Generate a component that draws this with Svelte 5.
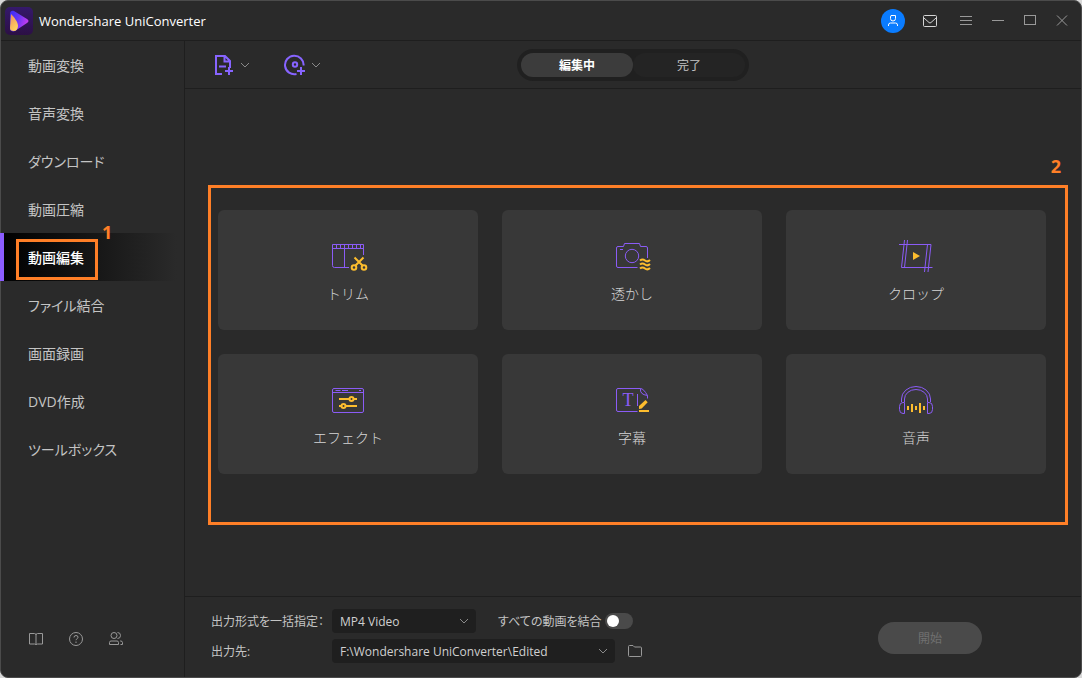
<script lang="ts">
	const navItems = [
		'動画変換',
		'音声変換',
		'ダウンロード',
		'動画圧縮',
		'動画編集',
		'ファイル結合',
		'画面録画',
		'DVD作成',
		'ツールボックス'
	];

	const tools = [
		{ id: 'trim', label: 'トリム' },
		{ id: 'watermark', label: '透かし' },
		{ id: 'crop', label: 'クロップ' },
		{ id: 'effect', label: 'エフェクト' },
		{ id: 'subtitle', label: '字幕' },
		{ id: 'audio', label: '音声' }
	];

	const tabs = ['編集中', '完了'];

	let activeNav = $state('動画編集');
	let activeTab = $state('編集中');
	let format = $state('MP4 Video');
	let folder = $state('F:\\Wondershare UniConverter\\Edited');
	let merge = $state(false);
</script>

{#snippet chevron()}
	<svg class="chevron" width="10" height="6" viewBox="0 0 10 6"><path d="M1 1l4 4 4-4" /></svg>
{/snippet}

<div class="window">
	<header class="titlebar">
		<svg class="logo" width="28" height="28" viewBox="0 0 28 28">
			<defs>
				<linearGradient id="logo-bg" x1="0" y1="0" x2="0" y2="1">
					<stop offset="0" stop-color="#35196b" />
					<stop offset="1" stop-color="#2c1045" />
				</linearGradient>
				<linearGradient id="logo-play" x1="0" y1="0" x2="1" y2="0.4">
					<stop offset="0" stop-color="#3a2cf5" />
					<stop offset="0.5" stop-color="#6535f5" />
					<stop offset="1" stop-color="#c23cf0" />
				</linearGradient>
				<linearGradient id="logo-drop" x1="0" y1="0" x2="0.5" y2="1">
					<stop offset="0" stop-color="#ef8c62" />
					<stop offset="1" stop-color="#ffd25c" />
				</linearGradient>
			</defs>
			<rect width="28" height="28" rx="5" fill="url(#logo-bg)" />
			<path d="M5 7c0-3 2-4 4-3l13 8c2 1 2 3 0 4L10 24c-2 1-5 0-5-2z" fill="url(#logo-play)" />
			<path d="M6 7c3 3 7 8 7 12 0 3-2 5-4 5-3 0-4-1-4-3z" fill="url(#logo-drop)" />
		</svg>
		<span class="title">Wondershare UniConverter</span>
		<div class="controls">
			<button class="avatar" aria-label="アカウント">
				<svg width="24" height="24" viewBox="0 0 24 24">
					<path d="M10 6.500h4.500v3a2.500 2.500 0 0 1-5 0v-1.500zM7.500 17v-1q0-2 2-2h5q2 0 2 2v1" />
				</svg>
			</button>
			<button class="mail" aria-label="メッセージ">
				<svg width="14" height="14" viewBox="0 0 14 14">
					<rect x="0.500" y="1.500" width="13" height="11" rx="1" />
					<path d="M1 4l5 4.500q1 1 2 0L13 4" />
				</svg>
			</button>
			<button aria-label="メニュー">
				<svg width="12" height="12" viewBox="0 0 12 12"><path d="M0 1.500h12M0 5.500h12M0 9.500h12" /></svg>
			</button>
			<button aria-label="最小化">
				<svg width="12" height="12" viewBox="0 0 12 12"><path d="M0 5.500h12" /></svg>
			</button>
			<button aria-label="最大化">
				<svg width="12" height="12" viewBox="0 0 12 12"><rect x="0.500" y="0.500" width="11" height="9" /></svg>
			</button>
			<button aria-label="閉じる">
				<svg width="12" height="12" viewBox="0 0 12 12"><path d="M1 0.500l10 10M11 0.500l-10 10" /></svg>
			</button>
		</div>
	</header>

	<div class="body">
		<aside class="sidebar">
			<nav>
				{#each navItems as item (item)}
					<button class="nav-item" class:active={item === activeNav} onclick={() => (activeNav = item)}>
						{item}
						{#if item === '動画編集'}
							<span class="mark mark-nav"><b>1</b></span>
						{/if}
					</button>
				{/each}
			</nav>
			<div class="sidebar-tools">
				<button aria-label="ガイド">
					<svg width="16" height="16" viewBox="0 0 16 16">
						<path d="M1.500 2.500h5q1.500 0 1.500 1.500q0-1.500 1.500-1.500h5v10.500h-5q-1.500 0-1.500 1q0-1-1.500-1h-5zM8 4v10" />
					</svg>
				</button>
				<button aria-label="ヘルプ">
					<svg width="16" height="16" viewBox="0 0 16 16">
						<circle cx="8" cy="8" r="6.500" />
						<path d="M6 6.500q0-2 2-2t2 1.700q0 1-1 1.600t-1 1.400M8 10.500v1.500" />
					</svg>
				</button>
				<button aria-label="コミュニティ">
					<svg width="16" height="16" viewBox="0 0 16 16">
						<circle cx="6" cy="4.500" r="3" />
						<path d="M9.500 1.500a3 3 0 0 1 0 6M1.500 13.500v-2q0-1.500 1.500-1.500h6q1.500 0 1.500 1.500v2zM12 10h.500q2 0 2 1.500v2H12.500" />
					</svg>
				</button>
			</div>
		</aside>

		<main class="main">
			<div class="toolbar">
				<div class="add-buttons">
					<button aria-label="ファイルを追加">
						<svg width="22" height="22" viewBox="0 0 22 22" class="add-icon">
							<path d="M9 20H3V2h9l5 5v7M11.500 2v5.500H17M6 12.500h7M12 17h8M16 13v8" />
						</svg>
						{@render chevron()}
					</button>
					<button aria-label="ディスクを追加">
						<svg width="22" height="22" viewBox="0 0 22 22" class="add-icon">
							<path d="M12.500 20A9.300 9.300 0 1 1 19.600 11.500M13 17h8M17 13v8" />
							<circle cx="11" cy="10.500" r="2.200" />
						</svg>
						{@render chevron()}
					</button>
				</div>
				<div class="tabs">
					{#each tabs as tab (tab)}
						<button class:active={tab === activeTab} onclick={() => (activeTab = tab)}>{tab}</button>
					{/each}
				</div>
			</div>

			<section class="content">
				<div class="grid">
					{#each tools as tool (tool.id)}
						<button class="card">
							<svg class="tool-icon" width="40" height="40" viewBox="0 0 40 40">
								{#if tool.id === 'trim'}
									<path d="M21 31.500H6.500q-2 0-2-2v-21h31v10.500M4.500 12.500h31M16.500 12.500v19M8.500 8.500v4M12.500 8.500v4M16.500 8.500v4M20.500 8.500v4M24.500 8.500v4M28.500 8.500v4M32.500 8.500v4" />
									<g class="accent">
										<path d="M26.500 21.500l8 8M35.500 21.500l-8 8" />
										<circle cx="26" cy="31.500" r="2.300" />
										<circle cx="36" cy="31.500" r="2.300" />
									</g>
								{:else if tool.id === 'watermark'}
									<path d="M25.500 31.500H6q-1.500 0-1.500-1.500V12q0-1.500 1.500-1.500h5.500l1-3h15l1 3H34q1.500 0 1.500 1.500v10M8 13.500h3" />
									<circle cx="20" cy="20" r="6.700" />
									<path class="accent" d="M28 24.500q2.500-2 5 0t5-.500M28 28.500q2.500-2 5 0t5-.500M28 32.500q2.500-2 5 0t5-.500" />
								{:else if tool.id === 'crop'}
									<path d="M3 8.500h32M5.500 31.500h31M8.500 4L5.500 31.500M11.500 4L8.500 31.500M31.500 8.500L28.500 36M35 8.500L32 36" />
									<path class="fill" d="M17 16l7 4-7 4z" />
								{:else if tool.id === 'effect'}
									<rect x="4.500" y="8.500" width="31" height="24" rx="1.500" />
									<path d="M4.500 12.500h31M7.500 10.500h5M14 10.500h6M31 10.500h2" />
									<g class="accent">
										<path d="M11 19h10.500M25.500 19h3.500M11 26h2.500M18 26h11" />
										<circle cx="23.500" cy="19" r="2" />
										<circle cx="15.500" cy="26" r="2" />
									</g>
								{:else if tool.id === 'subtitle'}
									<path d="M25.500 31.500H6q-1.500 0-1.500-1.500V10q0-1.500 1.500-1.500h22.500q3 0 7 7v3M28.500 8.500q-1 6 7 7M25.500 14v12" />
									<text x="16" y="26" text-anchor="middle">T</text>
									<path class="accent" d="M27 31h10" />
									<path class="fill" d="M27 29v-3l6.500-6 2.200 2.200-6 6.300z" />
								{:else}
									<path d="M5.500 22v-3a14.500 12.500 0 0 1 29 0v3M8.500 22v-3a11.500 9.500 0 0 1 23 0v3" />
									<path d="M8.500 22.500v11H7q-3.500 0-3.500-4v-3q0-4 3.500-4zM31.500 22.500v11H33q3.500 0 3.500-4v-3q0-4-3.500-4z" />
									<path class="accent" d="M12 26v4M16 24v8M20 26v4M24 23v10M28 26v4" />
								{/if}
							</svg>
							<span>{tool.label}</span>
						</button>
					{/each}
					<span class="mark mark-grid"><b>2</b></span>
				</div>
			</section>

			<footer class="footer">
				<div class="options">
					<label for="format">出力形式を一括指定：</label>
					<div class="row">
						<div class="select format">
							<select id="format" bind:value={format}>
								<option>MP4 Video</option>
							</select>
							{@render chevron()}
						</div>
						<label class="merge">
							すべての動画を結合
							<input type="checkbox" role="switch" bind:checked={merge} />
						</label>
					</div>
					<label for="folder">出力先:</label>
					<div class="row">
						<div class="select folder">
							<select id="folder" bind:value={folder}>
								<option>F:\Wondershare UniConverter\Edited</option>
							</select>
							{@render chevron()}
						</div>
						<button class="browse" aria-label="フォルダを開く">
							<svg width="14" height="12" viewBox="0 0 14 12">
								<path d="M0.500 1.500q0-1 1-1h3.500l1.500 1.500h6q1 0 1 1v7.500q0 1-1 1h-11q-1 0-1-1z" />
							</svg>
						</button>
					</div>
				</div>
				<button class="start" disabled>開始</button>
			</footer>
		</main>
	</div>
</div>

<style>
	:global(body) {
		background: #d8d8d8;
	}

	.window {
		box-sizing: border-box;
		min-height: 100vh;
		display: flex;
		flex-direction: column;
		background: #2a2a2a;
		border: 1px solid #4b4b4b;
		border-radius: 8px;
		color: #c4c4c4;
		font-family: 'Open Sans', 'Noto Sans CJK JP', sans-serif;
		font-size: 12px;
		font-feature-settings: 'palt';
	}

	button {
		font: inherit;
		color: inherit;
		background: none;
		border: 0;
		padding: 0;
		display: flex;
		align-items: center;
		justify-content: center;
	}

	svg {
		display: block;
		flex: none;
		fill: none;
		stroke: #999;
	}

	.titlebar {
		height: 39px;
		display: flex;
		align-items: center;
		padding: 0 3px 0 4px;
		border-bottom: 1px solid #1e1e1e;
	}

	.logo {
		stroke: none;
	}

	.title {
		margin-left: 6px;
		font-size: 13px;
		color: #fff;
	}

	.controls {
		margin-left: auto;
		display: flex;
		align-items: center;
	}

	.controls button {
		width: 32px;
		height: 32px;
	}

	.controls .mail {
		width: 40px;
	}

	.controls .avatar {
		width: 24px;
		height: 24px;
		margin-right: 5px;
		border-radius: 50%;
		background: #0a7cff;
	}

	.avatar svg {
		stroke: #fff;
	}

	.mail svg {
		stroke: #d4d4d4;
	}

	.body {
		flex: 1;
		display: flex;
	}

	.sidebar {
		width: 183px;
		flex: none;
		display: flex;
		flex-direction: column;
		justify-content: space-between;
		border-right: 1px solid #1e1e1e;
	}

	.nav-item {
		position: relative;
		width: 100%;
		height: 48px;
		justify-content: flex-start;
		padding-left: 27px;
		font-size: 14px;
	}

	.nav-item.active {
		background: linear-gradient(90deg, #000, #2a2a2a 96%);
		color: #fff;
		font-weight: 500;
	}

	.nav-item.active::before {
		content: '';
		position: absolute;
		left: -1px;
		top: 0;
		bottom: 0;
		width: 4px;
		background: #8b5cff;
	}

	.mark {
		position: absolute;
		border: 3px solid #ff7f27;
		color: #ff7f27;
		pointer-events: none;
	}

	.mark b {
		position: absolute;
		font-size: 18px;
		line-height: 18px;
	}

	.mark-nav {
		left: 15px;
		top: 6px;
		width: 76px;
		height: 35px;
	}

	.mark-nav b {
		left: 83px;
		top: -19px;
	}

	.mark-grid {
		inset: -25px -22px -51px -10px;
	}

	.mark-grid b {
		right: 4px;
		top: -31px;
	}

	.sidebar-tools {
		display: flex;
		gap: 24px;
		padding: 0 0 30px 27px;
	}

	.main {
		flex: 1;
		min-width: 0;
		display: flex;
		flex-direction: column;
	}

	.toolbar {
		height: 47px;
		display: grid;
		grid-template-columns: 1fr auto 1fr;
		align-items: center;
		border-bottom: 1px solid #1e1e1e;
	}

	.add-buttons {
		display: flex;
		gap: 34px;
		padding-left: 28px;
	}

	.add-buttons button {
		gap: 5px;
	}

	.add-icon {
		stroke: #8764ff;
		stroke-width: 2;
	}

	.chevron {
		stroke: #8a8a8a;
	}

	.tabs {
		display: flex;
		padding: 4px;
		border-radius: 16px;
		background: #202020;
	}

	.tabs button {
		width: 112px;
		height: 24px;
		border-radius: 12px;
		background: #242424;
	}

	.tabs .active {
		background: #3c3c3c;
		color: #fff;
		font-weight: 700;
	}

	.content {
		flex: 1;
		display: flex;
		align-items: center;
		justify-content: center;
		padding: 0 35px 2px 33px;
	}

	.grid {
		position: relative;
		width: 100%;
		max-width: 828px;
		display: grid;
		grid-template-columns: repeat(3, 1fr);
		gap: 24px;
	}

	.card {
		height: 120px;
		flex-direction: column;
		gap: 8px;
		border-radius: 6px;
		background: #383838;
		font-size: 14px;
		line-height: 20px;
		font-weight: 300;
		font-feature-settings: normal;
		color: #d6d6d6;
	}

	.tool-icon {
		stroke: #8b5cf6;
	}

	.accent {
		stroke: #fdbd2e;
		stroke-width: 2;
	}

	.fill {
		fill: #fdbd2e;
		stroke: none;
	}

	.tool-icon text {
		font: 18px 'Liberation Serif', serif;
		fill: #8b5cf6;
		stroke: none;
	}

	.footer {
		display: flex;
		align-items: center;
		justify-content: space-between;
		padding: 12px 99px 14px 26px;
		border-top: 1px solid #1e1e1e;
	}

	.options {
		display: grid;
		grid-template-columns: 115px auto;
		align-items: center;
		gap: 6px;
		white-space: nowrap;
	}

	.row {
		display: flex;
		align-items: center;
	}

	.select {
		position: relative;
	}

	.format {
		width: 144px;
	}

	.folder {
		width: 283px;
	}

	.select select {
		appearance: none;
		width: 100%;
		height: 24px;
		display: block;
		padding: 0 24px 0 8px;
		border: 0;
		border-radius: 4px;
		background: #1f1f1f;
		color: #d0d0d0;
		font: inherit;
	}

	.select .chevron {
		position: absolute;
		right: 7px;
		top: 9px;
		pointer-events: none;
	}

	.merge {
		display: flex;
		align-items: center;
		gap: 4px;
		margin-left: 22px;
	}

	.merge input {
		appearance: none;
		width: 28px;
		height: 16px;
		margin: 0;
		padding: 2px;
		border-radius: 8px;
		background: #4a4a4a;
	}

	.merge input::before {
		content: '';
		display: block;
		width: 12px;
		height: 12px;
		border-radius: 50%;
		background: #fff;
	}

	.merge input:checked {
		background: #8b5cff;
	}

	.merge input:checked::before {
		margin-left: auto;
	}

	.browse {
		margin-left: 13px;
	}

	.start {
		width: 104px;
		height: 32px;
		margin-top: 4px;
		border-radius: 16px;
		background: #4a4a4a;
		color: #707070;
	}
</style>
